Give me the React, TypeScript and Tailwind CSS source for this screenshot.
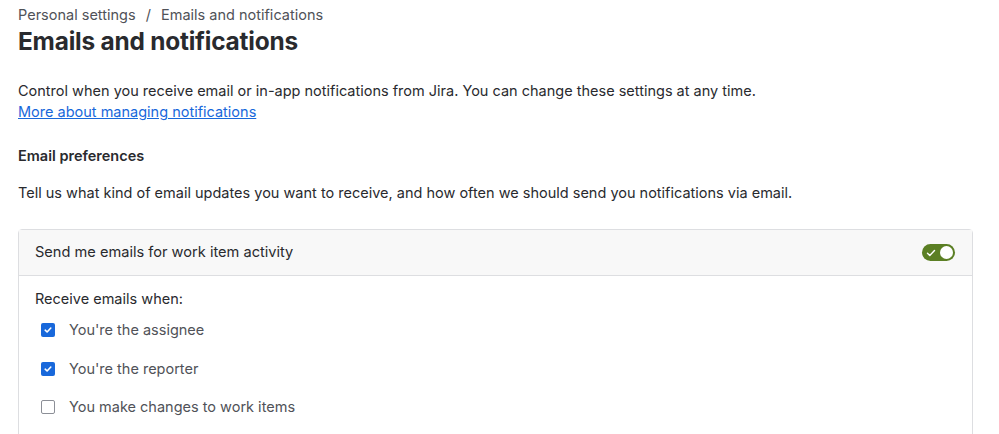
import React from "react";

function Check({ checked }: { checked: boolean }) {
  return checked ? (
    <span className="flex h-[14px] w-[14px] items-center justify-center rounded-[2px] bg-[#1868db]">
      <svg width="10" height="10" viewBox="0 0 10 10" fill="none">
        <path d="M2.2 5.2 L4.1 7 L7.8 3" stroke="white" strokeWidth="1.6" strokeLinecap="round" strokeLinejoin="round" />
      </svg>
    </span>
  ) : (
    <span className="h-[14px] w-[14px] rounded-[2px] border border-[#8c8f97] bg-white" />
  );
}

export default function App() {
  const items = [
    { label: "You're the assignee", checked: true },
    { label: "You're the reporter", checked: true },
    { label: "You make changes to work items", checked: false },
  ];
  return (
    <div className="h-[434px] w-[999px] overflow-hidden bg-white pl-[18px] pr-[26px] text-[#292a2e]" style={{ fontFamily: "Inter, 'Noto Sans', sans-serif" }}>
      <div className="pt-[5px] text-[14.5px] leading-[20px] text-[#505258]">
        Personal settings <span className="mx-[6px]">/</span> Emails and notifications
      </div>
      <h1 className="mt-0 text-[24.4px] font-bold leading-[32px] tracking-[-0.2px]">Emails and notifications</h1>
      <p className="mt-[23px] text-[14.5px] leading-[21px]">
        Control when you receive email or in-app notifications from Jira. You can change these settings at any time.
        <br />
        <a className="text-[#1868db] underline" href="#">More about managing notifications</a>
      </p>
      <h2 className="mt-[24px] text-[14.5px] font-semibold leading-[20px]">Email preferences</h2>
      <p className="mt-[17px] text-[14.5px] leading-[20px]">
        Tell us what kind of email updates you want to receive, and how often we should send you notifications via email.
      </p>
      <div className="mt-[26px] rounded-t-[4px] border border-[#dddee1]">
        <div className="flex h-[46px] items-center justify-between border-b border-[#dddee1] bg-[#f8f8f8] pl-[16px] pr-[17px]">
          <span className="text-[14.6px] font-normal">Send me emails for work item activity</span>
          <span className="flex h-[17px] w-[33px] items-center justify-between rounded-full bg-[#5b7f24] pl-[4px] pr-[2px]">
            <svg width="10" height="10" viewBox="0 0 10 10" fill="none">
              <path d="M1.5 5.3 L3.8 7.5 L8.5 2.5" stroke="white" strokeWidth="1.4" strokeLinecap="round" strokeLinejoin="round" />
            </svg>
            <span className="h-[13px] w-[13px] rounded-full bg-white" />
          </span>
        </div>
        <div className="pl-[16px] pt-[13px] pb-[20px]">
          <div className="text-[14.5px] leading-[20px]">Receive emails when:</div>
          <div className="mt-[11px] flex flex-col gap-[18.5px]">
            {items.map((it) => (
              <div key={it.label} className="flex h-[20px] items-center">
                <span className="ml-[6px] mr-[14px] flex"><Check checked={it.checked} /></span>
                <span className="text-[14.5px] text-[#505258]">{it.label}</span>
              </div>
            ))}
          </div>
        </div>
      </div>
    </div>
  );
}
